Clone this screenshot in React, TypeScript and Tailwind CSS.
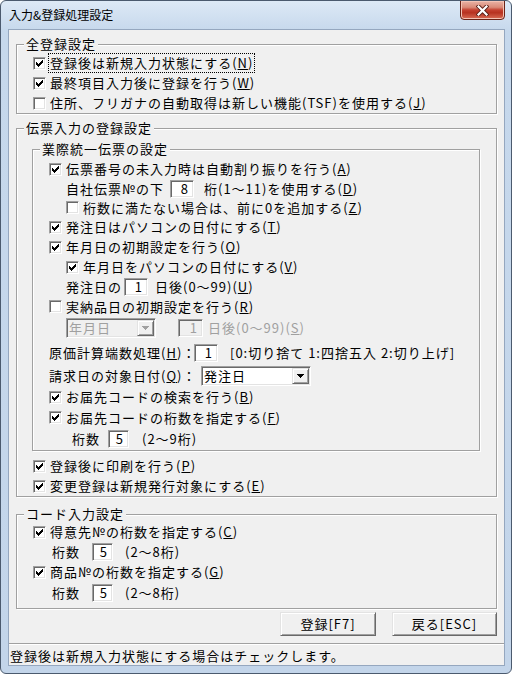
import React from "react";

const sunken =
  "border border-t-[#a0a0a0] border-l-[#a0a0a0] border-b-white border-r-white shadow-[inset_1px_1px_0_#696969,inset_-1px_-1px_0_#e3e3e3]";
const raised =
  "border border-t-[#e3e3e3] border-l-[#e3e3e3] border-b-[#696969] border-r-[#696969] shadow-[inset_1px_1px_0_#ffffff,inset_-1px_-1px_0_#a0a0a0]";

function M({ t }: { t: string }) {
  const i = t.indexOf("_");
  if (i < 0) return <>{t}</>;
  return (
    <>
      {t.slice(0, i)}
      <span className="underline decoration-1 underline-offset-[1px]">{t[i + 1]}</span>
      {t.slice(i + 2)}
    </>
  );
}

function Check({ on }: { on?: boolean }) {
  return (
    <span className={`flex h-[13px] w-[13px] shrink-0 items-center justify-center bg-white ${sunken}`}>
      {on && (
        <svg width="7" height="7" viewBox="0 0 7 7" shapeRendering="crispEdges">
          <path
            d="M6 0h1v1h-1z M5 1h2v1h-2z M0 2h1v1h-1z M4 2h3v1h-3z M0 3h2v1h-2z M3 3h3v1h-3z M0 4h5v1h-5z M1 5h3v1h-3z M2 6h1v1h-1z"
            fill="#000"
          />
        </svg>
      )}
    </span>
  );
}

function CRow({ on, t, cls, focus }: { on?: boolean; t: string; cls: string; focus?: boolean }) {
  return (
    <div className={`flex shrink-0 items-center ${cls}`}>
      <Check on={on} />
      <span
        className={`ml-[4px] ${focus ? "outline-1 outline-dotted outline-black outline-offset-[1px]" : ""}`}
      >
        <M t={t} />
      </span>
    </div>
  );
}

function Inp({ v, w, disabled }: { v: string; w: string; disabled?: boolean }) {
  return (
    <span
      className={`flex h-[18px] shrink-0 items-center justify-end pr-[4px] ${w} ${
        disabled ? "bg-[#f0f0f0] text-[#a0a0a0]" : "bg-white"
      } ${sunken}`}
    >
      {v}
    </span>
  );
}

function Combo({ v, w, disabled }: { v: string; w: string; disabled?: boolean }) {
  return (
    <span
      className={`flex h-[20px] shrink-0 p-[1px] ${w} ${disabled ? "bg-[#f0f0f0]" : "bg-white"} ${sunken}`}
    >
      <span className={`flex flex-1 items-center pl-[1px] ${disabled ? "text-[#a0a0a0]" : ""}`}>{v}</span>
      <span className={`flex w-[17px] items-center justify-center bg-[#f0f0f0] ${raised}`}>
        <svg width="7" height="4" viewBox="0 0 7 4" shapeRendering="crispEdges">
          <path d="M0 0h7v1h-7z M1 1h5v1h-5z M2 2h3v1h-3z M3 3h1v1h-1z" fill={disabled ? "#a0a0a0" : "#000"} />
        </svg>
      </span>
    </span>
  );
}

function Group({ title, cls, children }: { title: string; cls: string; children: React.ReactNode }) {
  return (
    <div
      className={`relative flex shrink-0 flex-col border border-[#a0a0a0] shadow-[inset_1px_1px_0_#ffffff,1px_1px_0_#ffffff] ${cls}`}
    >
      <span className="absolute left-[7px] top-[-9px] bg-[#f0f0f0] px-[2px] leading-[16px]">{title}</span>
      {children}
    </div>
  );
}

export default function App() {
  return (
    <div className="h-[674px] w-[512px] whitespace-nowrap bg-white font-['Noto_Sans_CJK_JP',sans-serif] text-[13px] leading-[16px] tracking-[1px] text-black">
      <div className="flex h-full w-full flex-col overflow-hidden rounded-[6px] border border-[#4b5a6e] bg-[linear-gradient(#dde9f6,#c6d8ec_30px,#c3d5ea)]">
        {/* title bar */}
        <div className="flex h-[28px] shrink-0">
          <span className="self-center pl-[8px] text-[12px] tracking-normal">入力&amp;登録処理設定</span>
          <div className="ml-auto mr-[6px] mt-[-1px] flex h-[20px] w-[45px] items-center justify-center rounded-b-[4px] border border-[#6a2216] bg-[linear-gradient(#eab4a6,#d98a78_35%,#c4402f_50%,#b73220_65%,#d96c55)] shadow-[inset_0_0_0_1px_#f3c3b5]">
            <svg width="13" height="11" viewBox="0 0 13 11">
              <path d="M2.5 1.5 L10.5 9.5 M10.5 1.5 L2.5 9.5" stroke="#5a2018" strokeWidth="4" strokeLinecap="square" />
              <path d="M2.5 1.5 L10.5 9.5 M10.5 1.5 L2.5 9.5" stroke="#ffffff" strokeWidth="2.2" strokeLinecap="square" />
            </svg>
          </div>
        </div>
        {/* client */}
        <div className="ml-[7px] flex h-[637px] w-[497px] shrink-0 flex-col border border-[#95a7bf] bg-[#f0f0f0]">
          <Group title="全登録設定" cls="mx-[7px] mt-[14px] h-[70px]">
            <div className="flex flex-col pl-[16px] pt-[8px]">
              <CRow on focus t="登録後は新規入力状態にする(_N)" cls="h-[20px]" />
              <CRow on t="最終項目入力後に登録を行う(_W)" cls="h-[20px]" />
              <CRow t="住所、フリガナの自動取得は新しい機能(TSF)を使用する(_J)" cls="h-[20px]" />
            </div>
          </Group>

          <Group title="伝票入力の登録設定" cls="mx-[7px] mt-[14px] h-[369px]">
            <Group title="業際統一伝票の設定" cls="ml-[15px] mr-[16px] mt-[20px] h-[302px]">
              <div className="flex flex-col pl-[16px] pt-[9px]">
                <CRow on t="伝票番号の未入力時は自動割り振りを行う(_A)" cls="h-[20px]" />
                <div className="flex h-[19px] items-center pl-[17px]">
                  <span className="w-[104px] shrink-0">自社伝票№の下</span>
                  <Inp v="8" w="w-[24px]" />
                  <span className="ml-[10px]">
                    <M t="桁(1～11)を使用する(_D)" />
                  </span>
                </div>
                <CRow t="桁数に満たない場合は、前に0を追加する(_Z)" cls="h-[19px] pl-[17px]" />
                <CRow on t="発注日はパソコンの日付にする(_T)" cls="h-[20px]" />
                <CRow on t="年月日の初期設定を行う(_O)" cls="h-[20px]" />
                <CRow on t="年月日をパソコンの日付にする(_V)" cls="h-[20px] pl-[17px]" />
                <div className="flex h-[20px] items-center pl-[17px]">
                  <span className="w-[58px] shrink-0">発注日の</span>
                  <Inp v="1" w="w-[24px]" />
                  <span className="ml-[7px]">
                    <M t="日後(0～99)(_U)" />
                  </span>
                </div>
                <CRow t="実納品日の初期設定を行う(_R)" cls="h-[19px]" />
                <div className="flex h-[24px] items-center pl-[17px]">
                  <Combo v="年月日" w="w-[90px]" disabled />
                  <Inp v="1" w="ml-[22px] w-[25px]" disabled />
                  <span className="ml-[5px] text-[#a0a0a0]">
                    <M t="日後(0～99)(_S)" />
                  </span>
                </div>
                <div className="flex h-[25px] items-center">
                  <span className="w-[145px] shrink-0">
                    <M t="原価計算端数処理(_H)：" />
                  </span>
                  <Inp v="1" w="w-[24px]" />
                  <span className="ml-[12px]">[0:切り捨て 1:四捨五入 2:切り上げ]</span>
                </div>
                <div className="flex h-[22px] items-center">
                  <span className="w-[152px] shrink-0">
                    <M t="請求日の対象日付(_Q)：" />
                  </span>
                  <Combo v="発注日" w="w-[110px]" />
                </div>
                <CRow on t="お届先コードの検索を行う(_B)" cls="h-[20px]" />
                <CRow on t="お届先コードの桁数を指定する(_F)" cls="h-[21px]" />
                <div className="flex h-[22px] items-center pl-[23px]">
                  <span className="w-[36px] shrink-0">桁数</span>
                  <Inp v="5" w="w-[21px]" />
                  <span className="ml-[13px]">(2～9桁)</span>
                </div>
              </div>
            </Group>
            <div className="mt-[5px] flex flex-col pl-[16px]">
              <CRow on t="登録後に印刷を行う(_P)" cls="h-[20px]" />
              <CRow on t="変更登録は新規発行対象にする(_E)" cls="h-[20px]" />
            </div>
          </Group>

          <Group title="コード入力設定" cls="mx-[7px] mt-[17px] h-[95px]">
            <div className="flex flex-col pl-[16px] pt-[7px]">
              <CRow on t="得意先№の桁数を指定する(_C)" cls="h-[20px]" />
              <div className="flex h-[20px] items-center pl-[19px]">
                <span className="w-[40px] shrink-0">桁数</span>
                <Inp v="5" w="w-[21px]" />
                <span className="ml-[12px]">(2～8桁)</span>
              </div>
              <CRow on t="商品№の桁数を指定する(_G)" cls="h-[20px]" />
              <div className="flex h-[22px] items-center pl-[19px]">
                <span className="w-[40px] shrink-0">桁数</span>
                <Inp v="5" w="w-[21px]" />
                <span className="ml-[12px]">(2～8桁)</span>
              </div>
            </div>
          </Group>

          <div className="mt-[3px] flex h-[24px] shrink-0 justify-end gap-[16px] pr-[7px]">
            <button className={`flex h-[24px] w-[96px] items-center justify-center bg-[#f0f0f0] ${raised}`}>
              登録[F7]
            </button>
            <button className={`flex h-[24px] w-[105px] items-center justify-center bg-[#f0f0f0] ${raised}`}>
              戻る[ESC]
            </button>
          </div>

          <div className="mt-[7px] h-[22px] shrink-0 border-t border-[#a0a0a0] pl-[1px] pt-[4px] shadow-[inset_0_1px_0_#ffffff]">
            登録後は新規入力状態にする場合はチェックします。
          </div>
        </div>
      </div>
    </div>
  );
}
